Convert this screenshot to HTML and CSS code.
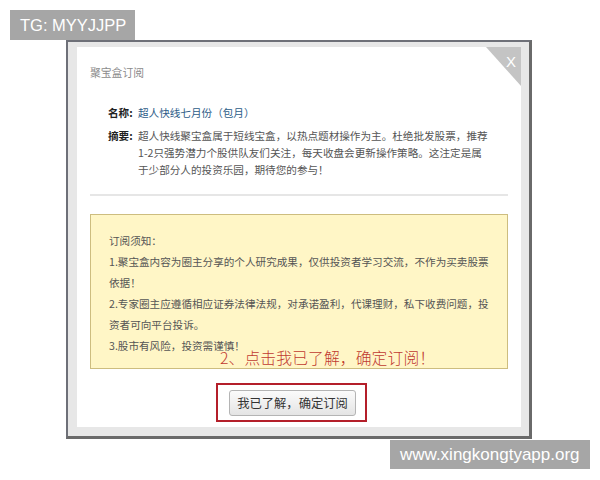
FILE: index.html
```html
<!DOCTYPE html>
<html lang="zh-CN">
<head>
<meta charset="utf-8">
<title>聚宝盒订阅</title>
<link rel="stylesheet" href="styles.css">
</head>
<body>
<div class="tg">TG: MYYJJPP</div>
<div class="dialog">
  <div class="panel">
    <div class="close"><span class="close-x">X</span></div>
    <div class="title">聚宝盒订阅</div>
    <div class="info">
      <div class="row">
        <div class="label">名称:</div>
        <div class="value name">超人快线七月份（包月）</div>
      </div>
      <div class="row">
        <div class="label">摘要:</div>
        <div class="value">超人快线聚宝盒属于短线宝盒，以热点题材操作为主。杜绝批发股票，推荐<br>1-2只强势潜力个股供队友们关注，每天收盘会更新操作策略。这注定是属<br>于少部分人的投资乐园，期待您的参与！</div>
      </div>
    </div>
    <div class="divider"></div>
    <div class="notice">
      <p>订阅须知：</p>
      <p>1.聚宝盒内容为圈主分享的个人研究成果，仅供投资者学习交流，不作为买卖股票<br>依据！</p>
      <p>2.专家圈主应遵循相应证券法律法规，对承诺盈利，代课理财，私下收费问题，投<br>资者可向平台投诉。</p>
      <p>3.股市有风险，投资需谨慎！</p>
      <div class="annot">2、点击我已了解，确定订阅！</div>
    </div>
    <div class="actions">
      <div class="highlight"><button class="btn" type="button">我已了解，确定订阅</button></div>
    </div>
  </div>
</div>
<div class="wm">www.xingkongtyapp.org</div>
</body>
</html>
```
FILE: styles.css
```css
html, body {
  margin: 0;
  padding: 0;
  background: #ffffff;
}
body {
  width: 600px;
  height: 480px;
  overflow: hidden;
  font-family: "Noto Sans CJK SC", "Liberation Sans", sans-serif;
}
.tg {
  box-sizing: border-box;
  width: 125px;
  height: 30px;
  margin: 10px 0 0 10px;
  padding-left: 10px;
  background: #a6a6a6;
  color: #ffffff;
  font-family: "Liberation Sans", Arial, sans-serif;
  font-size: 16.5px;
  line-height: 30px;
}
.dialog {
  box-sizing: border-box;
  width: 466px;
  height: 399px;
  margin-left: 66px;
  border-top: 2px solid #6e7078;
  border-left: 2px solid #6e7078;
  border-right: 3px solid #6a6a6a;
  border-bottom: 3px solid #6a6a6a;
  background: #e7e7e7;
  padding: 5px 8px 7px 9px;
}
.panel {
  position: relative;
  height: 380px;
  box-sizing: border-box;
  background: #ffffff;
  padding: 17px 13px 0 13px;
  font-size: 10.6px;
  color: #555555;
}
.close {
  position: absolute;
  top: 0;
  right: 0;
  width: 35px;
  height: 39px;
  background: #c4c4c4;
  clip-path: polygon(0 0, 100% 0, 100% 100%);
}
.close-x {
  position: absolute;
  top: 7px;
  right: 5px;
  color: #ffffff;
  font-family: "Liberation Sans", Arial, sans-serif;
  font-size: 15px;
  line-height: 16px;
}
.title {
  line-height: 16px;
  color: #8c8c8c;
  font-size: 10.8px;
}
.info {
  margin-top: 24px;
  padding-left: 18px;
}
.row {
  display: flex;
  line-height: 17px;
}
.row + .row {
  margin-top: 6px;
}
.label {
  width: 30px;
  flex: none;
  color: #222222;
  font-weight: bold;
}
.value {
  color: #555555;
  white-space: nowrap;
}
.value.name {
  color: #2d5c88;
}
.divider {
  margin-top: 16px;
  height: 2px;
  background: #e6e6e6;
}
.notice {
  position: relative;
  box-sizing: border-box;
  height: 155px;
  margin-top: 18px;
  border: 1px solid #cdbd7f;
  background: #fff6c6;
  padding: 15px 0 0 18px;
  color: #555555;
  white-space: nowrap;
}
.notice p {
  margin: 0;
  line-height: 21px;
}
.annot {
  position: absolute;
  left: 129px;
  top: 134px;
  color: #bf3a30;
  font-size: 15.8px;
  font-weight: 300;
  line-height: 18px;
  letter-spacing: 0.1px;
}
.actions {
  margin-top: 14px;
  padding-left: 126px;
}
.highlight {
  box-sizing: border-box;
  width: 151px;
  height: 39px;
  border: 2px solid #b41f2a;
  padding: 5px 0 0 11px;
}
.btn {
  box-sizing: border-box;
  width: 127px;
  height: 26px;
  margin: 0;
  padding: 0;
  border: 1px solid #b4b4b4;
  border-radius: 3px;
  background: linear-gradient(#fbfbfb, #e4e4e4);
  color: #333333;
  font-family: "Noto Sans CJK SC", sans-serif;
  font-size: 12.3px;
  line-height: 24px;
}
.wm {
  box-sizing: border-box;
  width: 200px;
  height: 29px;
  margin: 1px 0 0 390px;
  padding-left: 10px;
  background: #a6a6a6;
  color: #ffffff;
  font-family: "Liberation Sans", Arial, sans-serif;
  font-size: 17px;
  line-height: 29px;
}
```
